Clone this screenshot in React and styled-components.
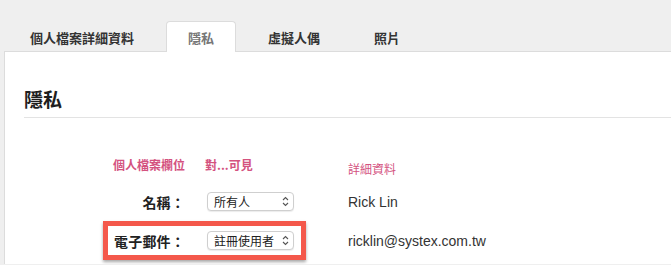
import * as React from 'react';
import styled, { createGlobalStyle } from 'styled-components';

const GlobalStyle = createGlobalStyle`
  html, body {
    margin: 0;
    padding: 0;
    background: #efefef;
    overflow: hidden;
  }
  body {
    font-family: "Liberation Sans", "Noto Sans CJK TC", sans-serif;
    color: #222;
  }
`;

const Page = styled.div`
  padding: 21px 0 0 4px;
`;

const TabList = styled.div`
  display: flex;
  gap: 10px;
  padding-left: 4px;
  position: relative;
  z-index: 1;
`;

const Tab = styled.div`
  height: 31px;
  box-sizing: border-box;
  padding: 1px 21px 0;
  display: flex;
  align-items: center;
  font-family: "Noto Sans CJK TC", sans-serif;
  font-size: 13px;
  font-weight: 700;
  color: ${(p) => (p.$active ? '#777' : '#333')};
  background: ${(p) => (p.$active ? '#fff' : 'transparent')};
  border: 1px solid ${(p) => (p.$active ? '#dcdcdc' : 'transparent')};
  border-bottom: none;
  border-radius: 4px 4px 0 0;
  margin-bottom: -1px;
`;

const Panel = styled.div`
  background: #fff;
  border-top: 1px solid #dcdcdc;
  border-left: 1px solid #dcdcdc;
  height: 212px;
`;

const Heading = styled.h2`
  margin: 0 0 0 19px;
  padding: 35px 0 6px;
  border-bottom: 1px solid #e3e3e3;
  font-family: "Noto Sans CJK TC", sans-serif;
  font-size: 19px;
  line-height: 24px;
  font-weight: 700;
  color: #1e1e1e;
`;

const Form = styled.div`
  padding: 37px 0 0 98px;
  display: flex;
  flex-direction: column;
`;

const Row = styled.div`
  display: flex;
  align-items: center;
`;

const Field = styled.div`
  display: flex;
  align-items: center;
  box-sizing: border-box;
  width: 203px;
  height: ${(p) => (p.$header ? '20px' : '39px')};
  padding: 0 7px 0 4px;
  border-style: solid;
  border-width: ${(p) => (p.$header ? '0 5px' : '5px')};
  border-color: ${(p) => (p.$highlight ? '#f4584b' : 'transparent')};
  box-shadow: ${(p) => (p.$highlight ? '0 2px 3px rgba(0,0,0,0.35)' : 'none')};
  margin-bottom: ${(p) => (p.$header ? '7px' : '0')};
`;

const Label = styled.div`
  width: 73px;
  flex: none;
  text-align: right;
  white-space: nowrap;
  font-family: "Noto Sans CJK TC", sans-serif;
  font-size: 14px;
  font-weight: 700;
  color: #222;
  letter-spacing: 0.2px;
`;

const HeaderText = styled.div`
  font-family: "Noto Sans CJK TC", sans-serif;
  font-size: 12px;
  font-weight: ${(p) => (p.$light ? 400 : 700)};
  line-height: 20px;
  color: #d4527f;
  white-space: nowrap;
  width: ${(p) => p.$width || 'auto'};
  text-align: ${(p) => p.$align || 'left'};
  margin-left: ${(p) => p.$offset || '0'};
`;

const SelectWrap = styled.div`
  position: relative;
  margin-left: 22px;
  width: 87px;
  height: 19px;
`;

const Select = styled.select`
  appearance: none;
  -webkit-appearance: none;
  width: 100%;
  height: 100%;
  box-sizing: border-box;
  margin: 0;
  padding: 0 0 0 6px;
  border: 1px solid #cfcfcf;
  border-radius: 4px;
  background: #fff;
  box-shadow: 0 1px 1px rgba(0, 0, 0, 0.08);
  font-family: "Noto Sans CJK TC", sans-serif;
  font-size: 12px;
  color: #222;
  outline: none;
`;

const Chevrons = styled.svg`
  position: absolute;
  right: 5px;
  top: 4px;
  pointer-events: none;
`;

const Detail = styled.div`
  margin-left: 42px;
  font-family: "Liberation Sans", Arial, sans-serif;
  font-size: 14px;
  color: #333;
  white-space: nowrap;
`;

function VisibilitySelect({ value, options }) {
  return (
    <SelectWrap>
      <Select defaultValue={value}>
        {options.map((o) => (
          <option key={o}>{o}</option>
        ))}
      </Select>
      <Chevrons width="7" height="11" viewBox="0 0 7 11">
        <path d="M1 4 L3.5 1.5 L6 4" fill="none" stroke="#555" strokeWidth="1.1" />
        <path d="M1 7 L3.5 9.5 L6 7" fill="none" stroke="#555" strokeWidth="1.1" />
      </Chevrons>
    </SelectWrap>
  );
}

const tabs = ['個人檔案詳細資料', '隱私', '虛擬人偶', '照片'];
const options = ['所有人', '註冊使用者', '僅限自己'];

const rows = [
  { label: '名稱：', value: '所有人', detail: 'Rick Lin' },
  { label: '電子郵件：', value: '註冊使用者', detail: 'ricklin@systex.com.tw', highlight: true },
];

export default function App() {
  return (
    <>
      <GlobalStyle />
      <Page>
        <TabList>
          {tabs.map((t) => (
            <Tab key={t} $active={t === '隱私'}>
              {t}
            </Tab>
          ))}
        </TabList>
        <Panel>
          <Heading>隱私</Heading>
          <Form>
            <Row>
              <Field $header>
                <HeaderText $width="73px" $align="right">個人檔案欄位</HeaderText>
                <HeaderText $offset="20px">對...可見</HeaderText>
              </Field>
              <HeaderText $offset="42px" $light>詳細資料</HeaderText>
            </Row>
            {rows.map((r) => (
              <Row key={r.label}>
                <Field $highlight={r.highlight}>
                  <Label>{r.label}</Label>
                  <VisibilitySelect value={r.value} options={options} />
                </Field>
                <Detail>{r.detail}</Detail>
              </Row>
            ))}
          </Form>
        </Panel>
      </Page>
    </>
  );
}
